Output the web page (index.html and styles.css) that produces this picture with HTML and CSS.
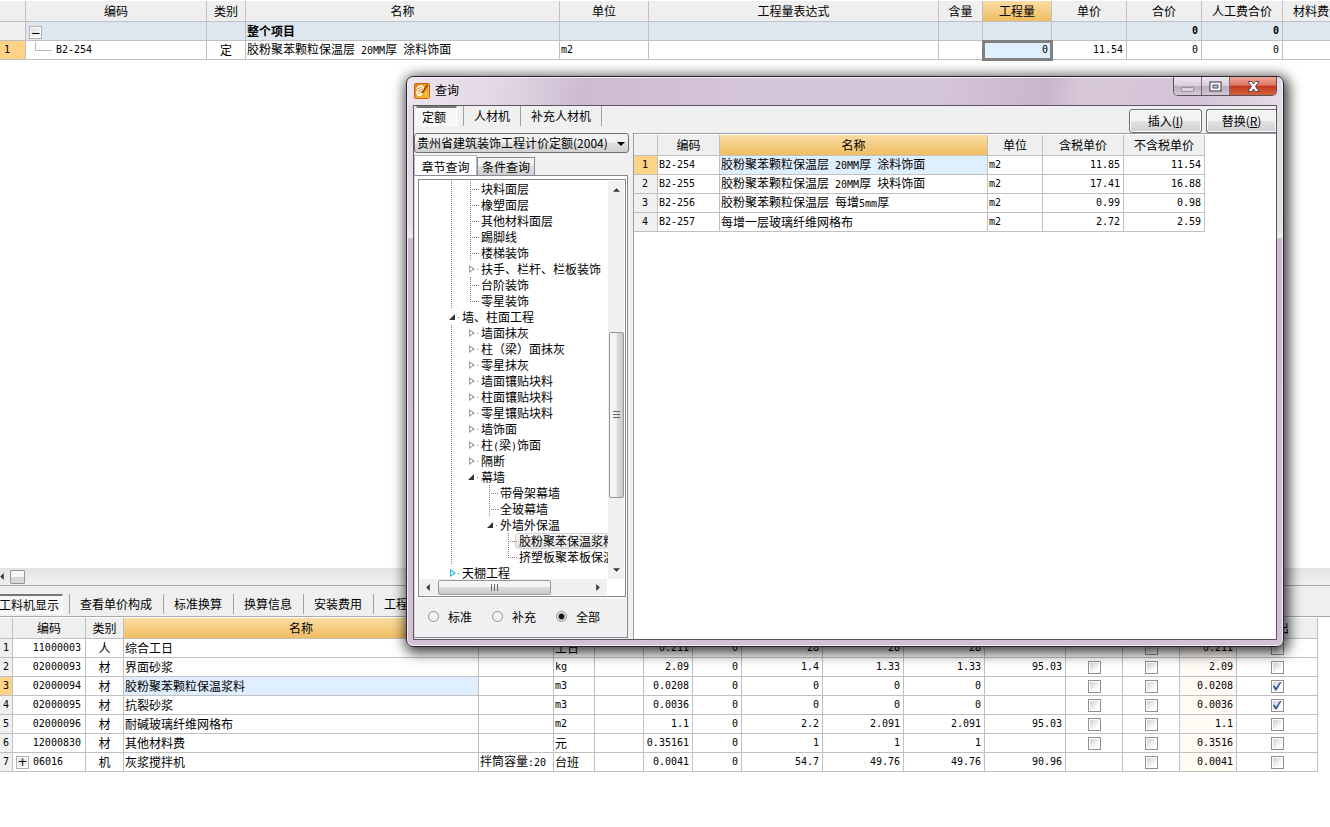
FILE: index.html
```
<!DOCTYPE html>
<html lang="zh-CN">
<head>
<meta charset="utf-8">
<title>查询</title>
<link rel="stylesheet" href="styles.css">
</head>
<body>
<main class="app">
  <section class="top-pane">
    <table class="grid project">
      <colgroup><col class="w26"><col class="w181"><col class="w39"><col class="w314"><col class="w89"><col class="w290"><col class="w44"><col class="w69"><col class="w75"><col class="w75"><col class="w81"><col class="w81"></colgroup>
      <thead><tr><th></th><th>编码</th><th>类别</th><th>名称</th><th>单位</th><th>工程量表达式</th><th>含量</th><th class="hot">工程量</th><th>单价</th><th>合价</th><th>人工费合价</th><th>材料费合价</th></tr></thead>
      <tbody>
        <tr class="summary"><td class="no"></td><td><button class="expander root" aria-label="折叠">−</button></td><td></td><td>整个项目</td><td></td><td></td><td></td><td></td><td></td><td class="num">0</td><td class="num">0</td><td></td></tr>
        <tr><td class="no hot">1</td><td class="code child"><span class="branch"></span>B2-254</td><td class="mid">定</td><td>胶粉聚苯颗粒保温层<span class="n"> 20MM</span>厚<span class="n"> </span>涂料饰面</td><td class="unit">m2</td><td></td><td></td><td class="num focus">0</td><td class="num">11.54</td><td class="num">0</td><td class="num">0</td><td></td></tr>
      </tbody>
    </table>
  </section>

  <section class="bottom-pane">
    <div class="hscroll"><svg class="arrow" viewBox="0 0 4 8"><path d="M4 0v8L0 4z"/></svg><span class="mini-thumb"></span></div>
    <nav class="tabs detail-tabs">
      <button class="tab pressed">工料机显示</button><button class="tab">查看单价构成</button><button class="tab">标准换算</button><button class="tab">换算信息</button><button class="tab">安装费用</button><button class="tab">工程量明细</button>
    </nav>
    <table class="grid detail">
      <colgroup><col class="w13"><col class="w73"><col class="w38"><col class="w355"><col class="w75"><col class="w41"><col class="w49"><col class="w49"><col class="w49"><col class="w81"><col class="w81"><col class="w81"><col class="w81"><col class="w57"><col class="w57"><col class="w57"><col class="w81"></colgroup>
      <thead><tr><th></th><th>编码</th><th>类别</th><th class="hot">名称</th><th>规格</th><th>单位</th><th></th><th>含量</th><th></th><th></th><th></th><th></th><th></th><th></th><th></th><th></th><th>输出</th></tr></thead>
      <tbody>
        <tr><td class="no">1</td><td class="code right">11000003</td><td class="mid">人</td><td>综合工日</td><td></td><td>工日</td><td></td><td class="num">0.211</td><td class="num">0</td><td class="num">28</td><td class="num">28</td><td class="num">28</td><td></td><td></td><td class="mid"><input type="checkbox" aria-label="暂估"></td><td class="num warm">0.211</td><td class="mid"><input type="checkbox" aria-label="输出"></td></tr>
        <tr><td class="no">2</td><td class="code right">02000093</td><td class="mid">材</td><td>界面砂浆</td><td></td><td class="unit">kg</td><td></td><td class="num">2.09</td><td class="num">0</td><td class="num">1.4</td><td class="num">1.33</td><td class="num">1.33</td><td class="num">95.03</td><td class="mid"><input type="checkbox" aria-label="锁定"></td><td class="mid"><input type="checkbox" aria-label="暂估"></td><td class="num warm">2.09</td><td class="mid"><input type="checkbox" aria-label="输出"></td></tr>
        <tr><td class="no hot">3</td><td class="code right">02000094</td><td class="mid">材</td><td class="picked">胶粉聚苯颗粒保温浆料</td><td></td><td class="unit">m3</td><td></td><td class="num">0.0208</td><td class="num">0</td><td class="num">0</td><td class="num">0</td><td class="num">0</td><td></td><td class="mid"><input type="checkbox" aria-label="锁定"></td><td class="mid"><input type="checkbox" aria-label="暂估"></td><td class="num warm">0.0208</td><td class="mid"><input type="checkbox" aria-label="输出" checked></td></tr>
        <tr><td class="no">4</td><td class="code right">02000095</td><td class="mid">材</td><td>抗裂砂浆</td><td></td><td class="unit">m3</td><td></td><td class="num">0.0036</td><td class="num">0</td><td class="num">0</td><td class="num">0</td><td class="num">0</td><td></td><td class="mid"><input type="checkbox" aria-label="锁定"></td><td class="mid"><input type="checkbox" aria-label="暂估"></td><td class="num warm">0.0036</td><td class="mid"><input type="checkbox" aria-label="输出" checked></td></tr>
        <tr><td class="no">5</td><td class="code right">02000096</td><td class="mid">材</td><td>耐碱玻璃纤维网格布</td><td></td><td class="unit">m2</td><td></td><td class="num">1.1</td><td class="num">0</td><td class="num">2.2</td><td class="num">2.091</td><td class="num">2.091</td><td class="num">95.03</td><td class="mid"><input type="checkbox" aria-label="锁定"></td><td class="mid"><input type="checkbox" aria-label="暂估"></td><td class="num warm">1.1</td><td class="mid"><input type="checkbox" aria-label="输出"></td></tr>
        <tr><td class="no">6</td><td class="code right">12000830</td><td class="mid">材</td><td>其他材料费</td><td></td><td>元</td><td></td><td class="num">0.35161</td><td class="num">0</td><td class="num">1</td><td class="num">1</td><td class="num">1</td><td></td><td class="mid"><input type="checkbox" aria-label="锁定"></td><td class="mid"><input type="checkbox" aria-label="暂估"></td><td class="num warm">0.3516</td><td class="mid"><input type="checkbox" aria-label="输出"></td></tr>
        <tr><td class="no">7</td><td class="code"><button class="expander" aria-label="展开">+</button>06016</td><td class="mid">机</td><td>灰浆搅拌机</td><td>拌筒容量<span class="n">:20</span></td><td>台班</td><td></td><td class="num">0.0041</td><td class="num">0</td><td class="num">54.7</td><td class="num">49.76</td><td class="num">49.76</td><td class="num">90.96</td><td></td><td class="mid"><input type="checkbox" aria-label="暂估"></td><td class="num warm">0.0041</td><td class="mid"><input type="checkbox" aria-label="输出"></td></tr>
      </tbody>
    </table>
  </section>
</main>

<div class="dialog" role="dialog" aria-labelledby="dlg-title">
  <header class="titlebar">
    <svg class="logo" viewBox="0 0 16 16"><defs><linearGradient id="lg" x1="0" y1="0" x2="1" y2="1"><stop offset="0" stop-color="#e07a1e"/><stop offset="1" stop-color="#f9c93c"/></linearGradient></defs><rect x=".5" y=".5" width="15" height="15" rx="1" fill="url(#lg)" stroke="#c9650c"/><path d="M2 5l3-2.500 3-.5 2 2v4l-2 4-3 1.500-2-1-1-3 1-2z" fill="#fff6d8"/><path d="M3 6l5-2M4 8.500l5-3M4 11l4-3" stroke="#d17a1c" stroke-width=".8" fill="none"/><path d="M13.500 2L8 10" stroke="#9a3d06" stroke-width="1.600"/><path d="M10 12.500l3-5.500v6z" fill="#ffe58a" stroke="#d88a18" stroke-width=".6"/></svg>
    <h1 id="dlg-title">查询</h1>
    <div class="caption">
      <button class="cap min" aria-label="最小化"><svg viewBox="0 0 13 11"><rect x=".5" y="6.500" width="12" height="4" rx=".5" fill="#ddd3dd" stroke="#9c929e"/></svg></button><button class="cap" aria-label="最大化"><svg viewBox="0 0 13 11"><rect x="1" y="1" width="11" height="9" fill="#fff" stroke="#4b4d60" stroke-width="1.200"/><rect x="4" y="4" width="5" height="3" fill="#c6bfce" stroke="#4b4d60"/></svg></button><button class="cap close" aria-label="关闭"><svg viewBox="0 0 13 11"><path d="M1 .5h3.500l2 2.500 2-2.500H12L8.500 5.500 12 10.500H8.500l-2-2.500-2 2.500H1l3.500-5z" fill="#fff" stroke="#5a4856"/></svg></button>
    </div>
  </header>
  <div class="client">
    <div class="toolbar">
      <nav class="tabs"><button class="tab pressed">定额</button><button class="tab">人材机</button><button class="tab">补充人材机</button><span class="tab-end"></span></nav>
      <div class="actions"><button class="push">插入(<u>I</u>)</button><button class="push clipped">替换(<u>R</u>)</button></div>
    </div>
    <div class="body">
      <aside class="side">
        <select class="combo" aria-label="定额库"><option>贵州省建筑装饰工程计价定额(2004)</option></select>
        <div class="subtabs"><button class="subtab active">章节查询</button><button class="subtab">条件查询</button></div>
        <div class="panel">
          <div class="treebox">
            <ul class="tree">
              <li><i class="v"></i><i class="t"></i><span>块料面层</span></li>
              <li><i class="v"></i><i class="t"></i><span>橡塑面层</span></li>
              <li><i class="v"></i><i class="t"></i><span>其他材料面层</span></li>
              <li><i class="v"></i><i class="t"></i><span>踢脚线</span></li>
              <li><i class="v"></i><i class="t"></i><span>楼梯装饰</span></li>
              <li><i class="v"></i><i class="a"></i><span>扶手、栏杆、栏板装饰</span></li>
              <li><i class="v"></i><i class="t"></i><span>台阶装饰</span></li>
              <li><i class="v"></i><i class="l"></i><span>零星装饰</span></li>
              <li><i class="o"></i><span>墙、柱面工程</span></li>
              <li><i class="v"></i><i class="a"></i><span>墙面抹灰</span></li>
              <li><i class="v"></i><i class="a"></i><span>柱（梁）面抹灰</span></li>
              <li><i class="v"></i><i class="a"></i><span>零星抹灰</span></li>
              <li><i class="v"></i><i class="a"></i><span>墙面镶贴块料</span></li>
              <li><i class="v"></i><i class="a"></i><span>柱面镶贴块料</span></li>
              <li><i class="v"></i><i class="a"></i><span>零星镶贴块料</span></li>
              <li><i class="v"></i><i class="a"></i><span>墙饰面</span></li>
              <li><i class="v"></i><i class="a"></i><span>柱<span class="n">(</span>梁<span class="n">)</span>饰面</span></li>
              <li><i class="v"></i><i class="a"></i><span>隔断</span></li>
              <li><i class="v"></i><i class="o"></i><span>幕墙</span></li>
              <li><i class="v"></i><i></i><i class="t"></i><span>带骨架幕墙</span></li>
              <li><i class="v"></i><i></i><i class="t"></i><span>全玻幕墙</span></li>
              <li><i class="v"></i><i></i><i class="o"></i><span>外墙外保温</span></li>
              <li><i class="v"></i><i></i><i></i><i class="t"></i><span class="sel">胶粉聚苯保温浆料</span></li>
              <li><i class="v"></i><i></i><i></i><i class="l"></i><span>挤塑板聚苯板保温</span></li>
              <li><i class="a blue"></i><span>天棚工程</span></li>
            </ul>
            <div class="vbar"><svg class="arrow" viewBox="0 0 8 4"><path d="M0 4h8L4 0z"/></svg><span class="track"><span class="thumb"></span></span><svg class="arrow" viewBox="0 0 8 4"><path d="M0 0h8L4 4z"/></svg></div>
            <div class="hbar"><svg class="arrow" viewBox="0 0 4 8"><path d="M4 0v8L0 4z"/></svg><span class="track"><span class="thumb"></span></span><svg class="arrow" viewBox="0 0 4 8"><path d="M0 0v8l4-4z"/></svg></div>
          </div>
          <div class="radios"><label><input type="radio" name="scope">标准</label><label><input type="radio" name="scope">补充</label><label><input type="radio" name="scope" checked>全部</label></div>
        </div>
      </aside>
      <div class="results">
        <table class="grid">
          <colgroup><col class="w24"><col class="w62"><col class="w268"><col class="w55"><col class="w81"><col class="w81"></colgroup>
          <thead><tr><th></th><th>编码</th><th class="hot">名称</th><th>单位</th><th>含税单价</th><th>不含税单价</th></tr></thead>
          <tbody>
            <tr><td class="no hot">1</td><td class="code">B2-254</td><td class="picked">胶粉聚苯颗粒保温层<span class="n"> 20MM</span>厚<span class="n"> </span>涂料饰面</td><td class="unit">m2</td><td class="num">11.85</td><td class="num">11.54</td></tr>
            <tr><td class="no">2</td><td class="code">B2-255</td><td>胶粉聚苯颗粒保温层<span class="n"> 20MM</span>厚<span class="n"> </span>块料饰面</td><td class="unit">m2</td><td class="num">17.41</td><td class="num">16.88</td></tr>
            <tr><td class="no">3</td><td class="code">B2-256</td><td>胶粉聚苯颗粒保温层<span class="n"> </span>每增<span class="n">5mm</span>厚</td><td class="unit">m2</td><td class="num">0.99</td><td class="num">0.98</td></tr>
            <tr><td class="no">4</td><td class="code">B2-257</td><td>每增一层玻璃纤维网格布</td><td class="unit">m2</td><td class="num">2.72</td><td class="num">2.59</td></tr>
          </tbody>
        </table>
      </div>
    </div>
  </div>
</div>
</body>
</html>
```
FILE: styles.css
```
* { box-sizing: border-box; }
body { margin: 0; background: #fff; color: #000; font: 12px/16px "Noto Sans CJK SC", sans-serif; overflow: hidden; }
button, select, input { font: inherit; color: inherit; margin: 0; padding: 0; }
svg { display: block; }

.app { display: flex; flex-direction: column; height: 100vh; overflow: hidden; }
.top-pane { flex: 1; min-height: 0; padding-top: 1px; }
.bottom-pane { padding-bottom: 55px; }

/* data grids */
.grid { table-layout: fixed; border-collapse: separate; border-spacing: 0; width: 0; }
.grid th, .grid td { border: solid #c0c0c0; border-width: 0 1px 1px 0; padding: 0 2px 0 1px; height: 19px; line-height: 16px; white-space: nowrap; overflow: hidden; text-align: left; }
.grid th { height: 21px; padding: 0; background: #efefef; font-weight: normal; text-align: center; }
.grid th.hot { background: linear-gradient(#fbdca4, #f0be62); }
.grid td.no { background: #f0f0f0; text-align: center; }
.grid td.no.hot { background: #ffd387; }
.grid td.mid { text-align: center; padding: 0; }
.grid td.num { text-align: right; padding-right: 3px; }
.grid td.right { text-align: right; padding-right: 4px; }
.grid td.picked { background: #e0efff; }
.grid td.warm { background: #fffaf4; }
.num, .code, .unit, .no, .n { font-family: "DejaVu Sans Mono", monospace; font-size: 10px; }
.grid .summary td { background: #dee6f0; font-weight: bold; }
.grid .summary td.no { background: #f0f0f0; }
.grid td.focus { background: #e0efff; outline: 3px solid #808080; outline-offset: -2px; }
.project .no { padding-right: 12px; }
.detail .no { padding: 0; text-align: left; }
.branch { display: inline-block; width: 17px; height: 9px; margin: 0 4px 0 8px; border: solid #b8b8b8; border-width: 0 0 1px 1px; vertical-align: top; }
.expander { display: inline-block; width: 13px; height: 13px; margin: 0 4px 0 2px; border: 1px solid #b0b0b0; background: linear-gradient(135deg, #dcdce4, #fff); box-shadow: inset 0 0 0 1px #fff; font: 12px/10px "DejaVu Sans", sans-serif; vertical-align: middle; }
.w13 { width: 13px; } .w24 { width: 24px; } .w26 { width: 26px; } .w38 { width: 38px; } .w39 { width: 39px; }
.w41 { width: 41px; } .w44 { width: 44px; } .w49 { width: 49px; } .w55 { width: 55px; } .w57 { width: 57px; }
.w62 { width: 62px; } .w69 { width: 69px; } .w73 { width: 73px; } .w75 { width: 75px; } .w81 { width: 81px; }
.w89 { width: 89px; } .w181 { width: 181px; } .w268 { width: 268px; } .w290 { width: 290px; } .w314 { width: 314px; } .w355 { width: 355px; }

input[type="checkbox"] { appearance: none; display: inline-block; width: 13px; height: 13px; margin-bottom: 2px; border: 1px solid #8e8f8f; background: linear-gradient(135deg, #ccd2da, #fff 80%) content-box; padding: 1px; vertical-align: middle; }
input[type="checkbox"]:checked::before { content: ""; display: block; width: 9px; height: 9px; background: #3c58a0; clip-path: polygon(0 50%, 22% 45%, 40% 68%, 85% 0, 100% 5%, 45% 100%, 32% 100%); }
input[type="radio"] { appearance: none; width: 11px; height: 11px; border: 1px solid #8e8f8f; border-radius: 50%; background: #f4f4f4; }
input[type="radio"]:checked { background: radial-gradient(circle, #111 0 2px, #f4f4f4 4px); }

/* tab strips */
.tabs { display: flex; align-items: flex-start; }
.tab { border: 0; border-left: 1px solid #a0a0a0; background: none; height: 20px; padding: 0 10px; line-height: 20px; white-space: nowrap; }
.tab.pressed { border: 1px solid #fff; border-top: 2px solid #777; background: #f7f7f7; line-height: 18px; text-align: left; }
.tab-end { width: 1px; height: 20px; background: #a0a0a0; }
.hscroll { display: flex; align-items: center; height: 17px; background: linear-gradient(#e4e4e4, #f0f0f0); }
.hscroll .arrow { width: 4px; height: 7px; margin-right: 6px; }
.mini-thumb { width: 15px; height: 14px; border: 1px solid #979797; border-radius: 1px; background: linear-gradient(#f6f6f6 50%, #d8d8d8 51%); }
.detail-tabs { gap: 1px; height: 32px; margin-bottom: 1px; padding-top: 8px; background: #efefef; border: solid #a8a8a8; border-width: 1px 0; }
.detail-tabs .pressed { width: 64px; padding: 0; margin: 0 5px 0 -1px; border-left: 0; }
.arrow { fill: #333; }

/* floating window */
.dialog { position: absolute; left: 406px; top: 76px; width: 878px; height: 571px; display: flex; flex-direction: column; padding: 0 6px 6px; border: 1px solid #2b2530; border-radius: 7px; background: linear-gradient(#e6dce8, #e8dee8 150px, #f0eaf0 160px, #cdbad0 162px, #d3c2d6); box-shadow: inset 0 0 0 1px #f4ecf5, 2px 3px 13px 3px rgba(0, 0, 0, .75); }
.titlebar { display: flex; align-items: flex-start; height: 27px; flex: none; margin: 1px -5px 0; padding: 0 5px 0 6px; border-radius: 6px 6px 0 0; background: linear-gradient(100deg, #ece4ee, #e3d8e5 10%, #d9cbdc 15%, #cdbbd0 20%, #d6c6d9 40%, #d6c6d9 60%, #c8b6cb 73%, #d8c9da 77%, #d3c2d6 90%, #e6dbe8); }
.logo { width: 16px; height: 16px; margin: 5px 5px 0 0; }
.titlebar h1 { margin: 4px auto 0 0; font: 12px/16px "Noto Sans CJK SC", sans-serif; }
.caption { display: flex; margin-top: -1px; border: 1px solid #5c505e; border-top: 0; border-radius: 0 0 5px 5px; overflow: hidden; }
.cap { display: flex; align-items: center; justify-content: center; width: 28px; height: 18px; border: 0; border-right: 1px solid #75697a; background: linear-gradient(#efe7f0, #d9cddb 48%, #b9aabc 50%, #d5c8d7); }
.cap.close { width: 46px; border: 0; background: linear-gradient(#f0a898, #dc7564 46%, #c03820 50%, #d6603c); }
.cap svg { width: 13px; height: 11px; }
.client { display: flex; flex-direction: column; flex: 1; min-height: 0; border: 1px solid #5c5560; background: #f0f0f0; overflow: hidden; }
.toolbar { display: flex; justify-content: space-between; height: 27px; flex: none; padding-left: 2px; }
.toolbar .pressed { width: 41px; margin-right: 6px; padding: 0 5px; }
.actions { display: flex; gap: 4px; padding-top: 3px; overflow: hidden; }
.push { width: 73px; height: 24px; border: 1px solid #707070; border-radius: 3px; background: linear-gradient(#f3f3f3 48%, #e3e3e3 50%, #d0d0d0); box-shadow: inset 0 0 0 1px #fcfcfc; }
.push.clipped { width: 70px; border-right: 0; border-radius: 3px 0 0 3px; }
.body { display: flex; flex: 1; min-height: 0; }
.side { display: flex; flex-direction: column; width: 219px; flex: none; padding: 0 4px 1px 0; }
.combo { appearance: none; height: 20px; flex: none; padding: 0 2px; border: 1px solid #707070; border-radius: 3px; background: linear-gradient(#f2f2f2 45%, #e0e0e0 50%, #d0d0d0); }
.side::before { content: ""; align-self: flex-end; width: 8px; height: 4px; margin: 9px 4px -13px 0; background: #000; clip-path: polygon(0 0, 100% 0, 50% 100%); z-index: 1; pointer-events: none; }
.subtabs { display: flex; align-items: flex-end; height: 20px; flex: none; margin-top: 2px; }
.subtab { height: 18px; padding: 0 4px; border: 1px solid #868a94; border-bottom: 0; background: linear-gradient(#f2f2f2 45%, #dedede 50%, #d0d0d0); line-height: 17px; }
.subtab.active { width: 63px; height: 21px; margin-bottom: -1px; padding: 0 6px; background: #fff; border-color: #b8bac0; }
.panel { display: flex; flex-direction: column; flex: 1; min-height: 0; width: 214px; padding: 3px 1px 0 3px; border: 1px solid #868a94; border-left-color: #d8d8d8; background: linear-gradient(#fff, #fff) 0 0 / 100% 422px no-repeat, #f0f0f0; }
.treebox { display: grid; grid-template: 1fr 17px / 1fr 17px; flex: 1; min-height: 0; padding-top: 1px; border: 1px solid #828790; background: #fff; }
.tree { margin: 0; padding: 0 0 0 23px; list-style: none; overflow: hidden; min-height: 0; min-width: 0; }
.tree li { display: flex; height: 16px; line-height: 16px; white-space: nowrap; }
.tree i { position: relative; width: 19px; height: 16px; flex: none; --down: repeating-linear-gradient(#808080 0 1px, transparent 1px 2px); --across: repeating-linear-gradient(90deg, #808080 0 1px, transparent 1px 2px); background-repeat: no-repeat; }
.tree span { padding-left: 1px; }
.tree .n { padding: 0; }
.tree .v { background-image: var(--down); background-size: 1px 16px; background-position: 9px 0; }
.tree .t { background-image: var(--down), var(--across); background-size: 1px 16px, 9px 1px; background-position: 9px 0, 9px 8px; }
.tree .l { background-image: var(--down), var(--across); background-size: 1px 9px, 9px 1px; background-position: 9px 0, 9px 8px; }
.tree .a, .tree .o { background-image: linear-gradient(#808080, #808080); background-size: 1px 1px; background-position: 16px 8px; }
.tree .a::before { content: ""; display: block; width: 6px; height: 8px; margin: 4px 0 0 8px; background: #999; clip-path: polygon(evenodd, 0 0, 100% 50%, 0 100%, 0 0, 1px 2px, 1px 6px, 4px 4px, 1px 2px); }
.tree .blue::before { background: #1cb8ea; }
.tree .o::before { content: ""; display: block; width: 6px; height: 6px; margin: 5px 0 0 7px; background: #333; clip-path: polygon(100% 0, 100% 100%, 0 100%); }
.tree .sel { height: 16px; margin-left: -3px; padding-left: 3px; border: 1px solid #d4d4d4; border-radius: 3px; background: linear-gradient(#f8f8f8, #e4e4e4); line-height: 14px; }
.vbar, .hbar { display: flex; align-items: center; }
.vbar { flex-direction: column; width: 16px; padding: 7px 0; background: #f0f0f0; }
.vbar .arrow { width: 7px; height: 4px; }
.vbar .track { flex: 1; display: flex; flex-direction: column; align-items: center; width: 100%; padding-top: 140px; }
.vbar .thumb, .hbar .thumb { border: 1px solid #979797; border-radius: 2px; display: flex; align-items: center; justify-content: center; }
.vbar .thumb { width: 15px; height: 166px; background: linear-gradient(90deg, #f5f5f5 45%, #ddd 55%, #c8c8c8); }
.hbar { height: 16px; width: 188px; padding: 0 7px; background: #f0f0f0; }
.hbar .arrow { width: 4px; height: 7px; }
.hbar .track { flex: 1; height: 15px; display: flex; padding-left: 8px; }
.hbar .thumb { width: 113px; height: 15px; background: linear-gradient(#f5f5f5 45%, #ddd 50%, #c8c8c8); }
.thumb::before { content: ""; width: 8px; height: 7px; background: repeating-linear-gradient(90deg, #666 0 1px, transparent 1px 3px); }
.vbar .thumb::before { width: 7px; height: 8px; background: repeating-linear-gradient(#666 0 1px, transparent 1px 3px); }
.radios { display: flex; flex: none; height: 40px; gap: 16px; padding-left: 10px; padding-bottom: 1px; align-items: center; }
.radios label { display: flex; align-items: center; gap: 9px; width: 48px; white-space: nowrap; }
.radios input { flex: none; }
.results { flex: 1; min-width: 0; padding-top: 1px; border: 1px solid #9a9da4; border-width: 1px 0 0 1px; background: #fff; }
```
